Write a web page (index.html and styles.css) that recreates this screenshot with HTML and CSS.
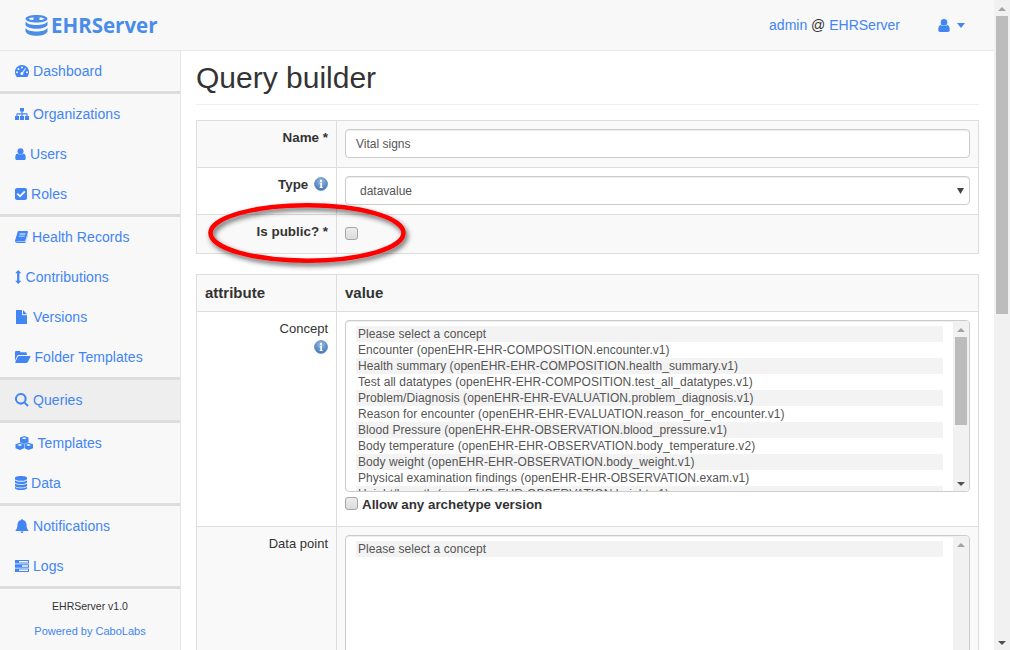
FILE: index.html
```html
<!DOCTYPE html>
<html lang="en">
<head>
<meta charset="utf-8">
<title>Query builder - EHRServer</title>
<link rel="stylesheet" href="styles.css">
</head>
<body>
<div class="window">
  <div class="page">
    <header class="topbar">
      <a class="brand">
        <svg width="23" height="21" viewBox="0 0 23 21"><path fill-rule="evenodd" d="M11.500 0C17.500 0 22.500 1.600 22.500 3.800S17.500 7.600 11.500 7.600.5 6 .5 3.800 5.500 0 11.500 0zM3.500 3.800C4.500 4.700 6 5 8.700 5 8.300 4.700 8.300 3 8.700 2.600 6 2.600 4.500 2.900 3.500 3.800zM14.300 2.600C14.700 3 14.700 4.700 14.300 5 17 5 18.500 4.700 19.500 3.800 18.500 2.900 17 2.600 14.300 2.600z"/><path d="M.5 6.500C2 9 6.500 10 11.500 10S21 9 22.500 6.500V10C21 12.500 16.500 13.700 11.500 13.700S2 12.500.5 10z"/><path d="M.5 13C2 15.500 6.500 16.500 11.500 16.500S21 15.500 22.500 13V16.500C21 19.500 16.500 20.800 11.500 20.800S2 19.500.5 16.500z"/></svg>
        <span>EHRServer</span>
      </a>
      <div class="account">
        <span class="who"><a>admin</a> @ <a>EHRServer</a></span>
        <span class="usermenu">
          <svg width="12" height="13" viewBox="0 0 12 13"><circle cx="6" cy="3.400" r="3.300"/><path d="M2.600 6C4 7.300 8 7.300 9.400 6 11 6.200 11.700 8 11.700 11 11.700 12.300 11 13 10 13H2C1 13 .3 12.300 .3 11 .3 8 1 6.200 2.600 6z"/></svg>
          <i class="caret"></i>
        </span>
      </div>
    </header>

    <div class="body">
      <nav class="sidebar">
        <ul class="group">
          <li><a class="item"><svg width="14" height="12" viewBox="0 0 14 12"><path fill-rule="evenodd" d="M7 0C3.100 0 0 3.100 0 7 0 8.800.6 10.400 1.600 11.700 1.800 11.900 2 12 2.300 12H11.700C12 12 12.200 11.900 12.400 11.700 13.400 10.400 14 8.800 14 7 14 3.100 10.900 0 7 0zM7 1.500A1 1 0 1 1 7 3.500 1 1 0 0 1 7 1.500zM3.500 3A1 1 0 1 1 3.500 5 1 1 0 0 1 3.500 3zM2 6.200A1 1 0 1 1 2 8.200 1 1 0 0 1 2 6.200zM12 6.200A1 1 0 1 1 12 8.200 1 1 0 0 1 12 6.200zM10.300 3L11 3.500 8.200 7.800C8.600 8.500 8.500 9.400 7.800 9.800 7.100 10.300 6.100 10.100 5.600 9.400 5.200 8.700 5.400 7.800 6.100 7.300 6.500 7 7 7 7.400 7.100z"/></svg>Dashboard</a></li>
        </ul>
        <ul class="group">
          <li><a class="item"><svg width="14" height="12" viewBox="0 0 14 12"><path d="M5 0H9V3.500H7.600V5.300H11.800C12.300 5.300 12.600 5.600 12.600 6.100V8H14V12H10V8H11.500V6.400H7.600V8H9V12H5V8H6.400V6.400H2.500V8H4V12H0V8H1.400V6.100C1.400 5.600 1.700 5.300 2.200 5.300H6.400V3.500H5z"/></svg>Organizations</a></li>
          <li><a class="item"><svg width="11" height="12" viewBox="0 0 12 13"><circle cx="6" cy="3.400" r="3.300"/><path d="M2.600 6C4 7.300 8 7.300 9.400 6 11 6.200 11.700 8 11.700 11 11.700 12.300 11 13 10 13H2C1 13 .3 12.300 .3 11 .3 8 1 6.200 2.600 6z"/></svg>Users</a></li>
          <li><a class="item"><svg width="12" height="12" viewBox="0 0 12 12"><path fill-rule="evenodd" d="M2 0H10C11.100 0 12 .9 12 2V10C12 11.100 11.100 12 10 12H2C.9 12 0 11.100 0 10V2C0 .9.9 0 2 0zM5 9.600L10.500 4.100 9.200 2.800 5 7 2.900 4.900 1.600 6.200z"/></svg>Roles</a></li>
        </ul>
        <ul class="group">
          <li><a class="item"><svg width="13" height="12" viewBox="0 0 13 12"><path fill-rule="evenodd" d="M3.500 0H12C12.800 0 13.100.6 12.900 1.300L10.400 9.400C10.200 10.200 9.600 10.600 8.900 10.600H2C1.400 10.600 1.100 11 1.800 11H10C10.500 11 10.800 10.800 11 10.300L12.800 3.500 13 4 10.900 11C10.700 11.600 10.200 12 9.500 12H2.200C1 12 .1 11.100.1 10 .1 9.700 0 9.400.2 9L2.700.8C2.800.3 3.100 0 3.500 0zM4.700 2.600L4.500 3.400H10.200L10.400 2.600zM4 4.700L3.800 5.500H9.500L9.700 4.700z"/></svg>Health Records</a></li>
          <li><a class="item"><svg width="6.500" height="14" viewBox="0 0 6.500 14"><path d="M3.250 0L6.300 3.200H4.400V10.800H6.300L3.250 14 .2 10.800H2.100V3.200H.2z"/></svg>Contributions</a></li>
          <li><a class="item"><svg width="14" height="14" viewBox="0 0 14 14"><path d="M1 0H7V4.500C7 5 7.300 5.300 7.800 5.300H12V14H1zM8 0L12 4.200H8z"/></svg>Versions</a></li>
          <li><a class="item"><svg width="15.500" height="12" viewBox="0 0 15.500 12"><path d="M0 10V1.500C0 .7.500.1 1.300.1H4.300C5 .1 5.500.6 5.500 1.300H10.500C11.300 1.300 11.800 1.800 11.800 2.600V4H4C3 4 2.300 4.500 1.900 5.300zM4 5H14.800C15.400 5 15.700 5.500 15.400 6L13 10.800C12.600 11.500 12.100 12 11.200 12H1C.4 12 .1 11.500.4 11L2.600 5.900C2.900 5.300 3.300 5 4 5z"/></svg>Folder Templates</a></li>
        </ul>
        <ul class="group">
          <li><a class="item active"><svg width="14" height="14" viewBox="0 0 14 14"><path fill-rule="evenodd" d="M5.800 0A5.800 5.800 0 0 1 10.500 9.200L13.700 12.300 12.300 13.700 9.200 10.500A5.800 5.800 0 1 1 5.800 0zM5.800 2A3.800 3.800 0 1 0 5.800 9.600 3.800 3.800 0 0 0 5.800 2z"/></svg>Queries</a></li>
        </ul>
        <ul class="group">
          <li><a class="item"><svg width="18.500" height="14" viewBox="0 0 18.500 14"><path fill-rule="evenodd" d="M9.200 0L13.500 1.600V6.300L9.200 8 5 6.300V1.600zM9.200 1.300L6.700 2.200 9.200 3.200 11.700 2.200zM5 6.800L9 8.300V12.200L5 14 .5 12.200V8.300zM5 8.100L2.400 9 5 10 7.400 9zM13.500 6.800L18 8.300V12.200L13.500 14 9.500 12.200V8.300zM13.500 8.100L11 9 13.500 10 16 9z"/></svg>Templates</a></li>
          <li><a class="item"><svg width="12" height="14" viewBox="0 0 12 14"><path d="M6 0C9.300 0 12 .8 12 1.800V3C12 4 9.300 4.800 6 4.800S0 4 0 3V1.800C0 .8 2.700 0 6 0zM0 4.200C1.400 5.200 3.600 5.700 6 5.700S10.600 5.200 12 4.200V6.300C12 7.300 9.300 8.200 6 8.200S0 7.300 0 6.300zM0 7.600C1.400 8.600 3.600 9 6 9S10.600 8.600 12 7.600V9.700C12 10.700 9.300 11.500 6 11.500S0 10.700 0 9.700zM0 10.700C1.400 11.700 3.600 12.300 6 12.300S10.600 11.700 12 10.700V12.200C12 13.200 9.300 14 6 14S0 13.200 0 12.200z"/></svg>Data</a></li>
        </ul>
        <ul class="group">
          <li><a class="item"><svg width="14" height="14" viewBox="0 0 14 14"><path d="M7 0C7.500 0 7.800.3 7.800.9 10 1.300 11.500 3.200 11.500 5.400 11.500 8.500 12.300 10.200 13.500 11.400V12H.5V11.400C1.700 10.200 2.500 8.500 2.500 5.400 2.500 3.200 4 1.300 6.200.9 6.200.3 6.500 0 7 0zM5.500 12.500H8.500C8.500 13.400 7.800 14 7 14S5.500 13.400 5.500 12.500z"/></svg>Notifications</a></li>
          <li><a class="item"><svg width="14" height="12" viewBox="0 0 14 12"><path fill-rule="evenodd" d="M0 0H14V3.500H0zM4 1V2.500H13V1zM0 4.300H14V7.700H0zM7 5.300V6.700H13V5.300zM0 8.500H14V12H0zM4 9.500V11H13V9.500z"/></svg>Logs</a></li>
        </ul>
        <footer class="credits">
          <p class="version">EHRServer v1.0</p>
          <p class="powered"><a>Powered by CaboLabs</a></p>
        </footer>
      </nav>

      <main class="content">
        <h1 class="title">Query builder</h1>

        <table class="grid">
          <tr class="odd">
            <th>Name *</th>
            <td><input class="field" type="text" value="Vital signs"></td>
          </tr>
          <tr>
            <th>Type <svg class="info" width="14" height="14" viewBox="0 0 14 14"><use href="#info"/></svg></th>
            <td>
              <div class="selectwrap">
                <select class="field picker"><option>datavalue</option></select>
                <svg class="selectarrow" width="7" height="6" viewBox="0 0 7 6"><path d="M0 0H7L3.500 6z"/></svg>
              </div>
            </td>
          </tr>
          <tr class="odd">
            <th>Is public? *</th>
            <td class="checkcell"><input class="check" type="checkbox"></td>
          </tr>
        </table>

        <table class="grid second">
          <tr class="odd head">
            <th>attribute</th>
            <th>value</th>
          </tr>
          <tr>
            <td class="label">Concept<br><svg class="info" width="14" height="14" viewBox="0 0 14 14"><use href="#info"/></svg></td>
            <td class="conceptcell">
              <div class="listbox concepts">
                <ul class="options">
                  <li>Please select a concept</li>
                  <li>Encounter (openEHR-EHR-COMPOSITION.encounter.v1)</li>
                  <li>Health summary (openEHR-EHR-COMPOSITION.health_summary.v1)</li>
                  <li>Test all datatypes (openEHR-EHR-COMPOSITION.test_all_datatypes.v1)</li>
                  <li>Problem/Diagnosis (openEHR-EHR-EVALUATION.problem_diagnosis.v1)</li>
                  <li>Reason for encounter (openEHR-EHR-EVALUATION.reason_for_encounter.v1)</li>
                  <li>Blood Pressure (openEHR-EHR-OBSERVATION.blood_pressure.v1)</li>
                  <li>Body temperature (openEHR-EHR-OBSERVATION.body_temperature.v2)</li>
                  <li>Body weight (openEHR-EHR-OBSERVATION.body_weight.v1)</li>
                  <li>Physical examination findings (openEHR-EHR-OBSERVATION.exam.v1)</li>
                  <li>Height/Length (openEHR-EHR-OBSERVATION.height.v1)</li>
                </ul>
                <div class="sbar">
                  <i class="up"></i>
                  <b class="thumb"></b>
                  <i class="down"></i>
                </div>
              </div>
              <label class="anyversion"><input class="check" type="checkbox"><span>Allow any archetype version</span></label>
            </td>
          </tr>
          <tr class="odd">
            <td class="label">Data point</td>
            <td>
              <div class="listbox points">
                <ul class="options">
                  <li>Please select a concept</li>
                </ul>
                <div class="sbar">
                  <i class="up"></i>
                </div>
              </div>
            </td>
          </tr>
        </table>
      </main>
    </div>

    <svg class="annotation" width="220" height="80" viewBox="0 0 220 80">
      <defs>
        <filter id="soft" x="-10%" y="-40%" width="120%" height="180%"><feDropShadow dx="2" dy="3" stdDeviation="2.500" flood-color="#333" flood-opacity=".75"/></filter>
      </defs>
      <ellipse cx="110" cy="40" rx="96.500" ry="27.700" fill="none" stroke="#f00" stroke-width="4.600" filter="url(#soft)"/>
    </svg>
  </div>

  <aside class="pagebar">
    <i class="up"></i>
    <b class="thumb"></b>
    <i class="down"></i>
  </aside>
</div>

<svg class="defs" width="0" height="0">
  <defs>
    <radialGradient id="infofill" cx="50%" cy="30%" r="70%"><stop offset="0" stop-color="#9dbde3"/><stop offset="1" stop-color="#3f74b5"/></radialGradient>
    <symbol id="info" viewBox="0 0 14 14">
      <circle cx="7" cy="7" r="6.500" fill="url(#infofill)" stroke="#5f8cc2" stroke-width=".7"/>
      <rect x="6" y="2.800" width="2" height="2" fill="#fff"/>
      <path d="M5.500 5.800H8V10.200H8.800V11H5.500V10.200H6.300V6.600H5.500z" fill="#fff"/>
    </symbol>
  </defs>
</svg>
</body>
</html>
```
FILE: styles.css
```css
* { box-sizing: border-box; }
html, body { margin: 0; padding: 0; height: 100%; overflow: hidden; }
body { font-family: "Liberation Sans", Arial, sans-serif; font-size: 14px; line-height: 20px; color: #333; background: #fff; }
ul { list-style: none; margin: 0; padding: 0; }
a { color: #4285f4; text-decoration: none; }
svg { fill: currentColor; flex: none; }
.defs { position: absolute; }

.window { display: flex; width: 1010px; height: 650px; overflow: hidden; }
.page { position: relative; width: 994px; height: 650px; overflow: hidden; }

.topbar { display: flex; justify-content: space-between; align-items: center; height: 51px; padding: 0 29px 0 25px; background: #f8f8f8; border-bottom: 1px solid #e7e7e7; }
.brand { display: flex; align-items: center; gap: 3px; color: #4a8de8; font-family: "Open Sans", "Liberation Sans", sans-serif; font-size: 20.5px; font-weight: 700; line-height: 24px; }
.account { display: flex; align-items: center; gap: 38px; }
.usermenu { display: flex; align-items: center; gap: 7px; color: #4285f4; }
.caret { width: 0; height: 0; border-top: 5px solid #4285f4; border-left: 4px solid transparent; border-right: 4px solid transparent; }

.body { display: flex; height: 599px; }
.sidebar { width: 181px; flex: none; background: #f8f8f8; border-right: 1px solid #e7e7e7; }
.group { border-bottom: 3px solid #ddd; }
.item { display: flex; align-items: center; gap: 4px; height: 40px; padding: 0 15px; letter-spacing: .07px; }
.item.active { background: #eee; }
.credits { text-align: center; line-height: 14px; padding-top: 10px; }
.credits p { margin: 0 0 11px; }
.version { color: #333; font-size: 10.5px; }
.powered { font-size: 11px; }

.content { flex: 1; min-width: 0; padding: 0 15px; }
.title { margin: 0 0 15px; padding: 9px 0 8px; height: 54px; font-size: 30px; line-height: 36px; font-weight: 400; color: #333; border-bottom: 1px solid #eee; }

.grid { width: 783px; border-collapse: collapse; table-layout: fixed; }
.grid th, .grid td { border: 1px solid #ddd; padding: 8px 8px 9px; vertical-align: top; }
.grid th:first-child, .grid td:first-child { width: 140px; }
.grid th { text-align: right; font-size: 13.4px; line-height: 18px; font-weight: 700; }
.grid .odd { background: #f9f9f9; }
.grid td.label { text-align: right; font-size: 13px; line-height: 18px; }
.second { margin-top: 20px; }
.second .head th { text-align: left; font-size: 15px; height: 37px; padding-top: 9px; }

.info { vertical-align: -2px; margin-left: 2px; }
.label .info { margin-top: 2px; }

.field { display: block; width: 100%; height: 29px; padding: 0 10px; font: 12px "Liberation Sans", Arial, sans-serif; color: #555; background: #fff; border: 1px solid #ccc; border-radius: 4px; box-shadow: inset 0 1px 1px rgba(0,0,0,.075); }
.selectwrap { position: relative; }
.picker { appearance: none; padding-left: 14px; }
.selectarrow { position: absolute; right: 6px; top: 12px; fill: #444; }
.grid .checkcell { height: 39px; padding-top: 12px; }
.check { appearance: none; display: block; flex: none; width: 13px; height: 13px; margin: 0; border: 1px solid #a6a6a6; border-radius: 3px; background: linear-gradient(#ededed, #dcdcdc); }

.grid .conceptcell { padding-bottom: 11px; }
.listbox { display: flex; justify-content: space-between; overflow: hidden; background: #fff; border: 1px solid #ccc; border-radius: 4px; box-shadow: inset 0 1px 1px rgba(0,0,0,.075); }
.concepts { height: 172px; }
.points { height: 300px; }
.options { width: 587px; margin-left: 10px; padding-top: 5px; font-size: 12px; line-height: 16px; letter-spacing: .06px; color: #555; white-space: nowrap; }
.options li { height: 16px; padding-left: 2px; }
.options li:nth-child(odd) { background: #f3f3f3; }
.sbar { width: 16px; flex: none; background: #f1f1f1; position: relative; }
.sbar .thumb { position: absolute; left: 2px; right: 2px; top: 16px; height: 88px; background: #bcbcbc; }
.sbar .up, .pagebar .up { position: absolute; left: 4px; top: 7px; width: 0; height: 0; border-bottom: 4px solid #a3a3a3; border-left: 4px solid transparent; border-right: 4px solid transparent; }
.sbar .down, .pagebar .down { position: absolute; left: 4px; bottom: 5px; width: 0; height: 0; border-top: 4px solid #505050; border-left: 4px solid transparent; border-right: 4px solid transparent; }
.anyversion { display: flex; align-items: flex-start; gap: 4px; margin-top: 3px; font-size: 13.35px; font-weight: 700; line-height: 20px; }
.anyversion .check { margin-top: 2px; }

.annotation { position: absolute; left: 197px; top: 193px; pointer-events: none; }

.pagebar { position: relative; width: 16px; flex: none; height: 650px; background: #f1f1f1; }
.pagebar .thumb { position: absolute; left: 2px; right: 2px; top: 16px; height: 298px; background: #bcbcbc; }
```
